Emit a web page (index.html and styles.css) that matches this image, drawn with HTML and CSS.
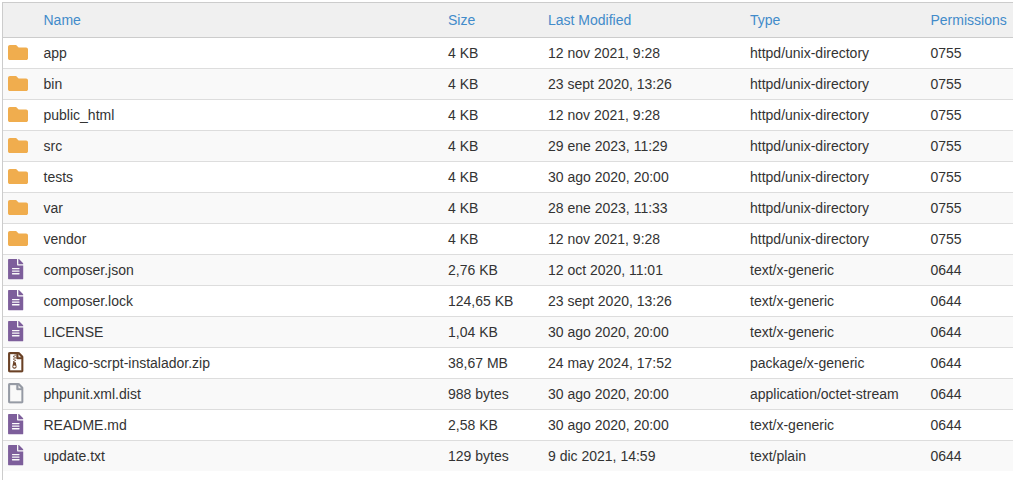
FILE: index.html
```html
<!DOCTYPE html>
<html lang="es">
<head>
<meta charset="utf-8">
<title>File Manager</title>
<link rel="stylesheet" href="styles.css">
</head>
<body>
<svg class="defs" width="0" height="0" aria-hidden="true">
  <symbol id="folder" viewBox="0 64 512 384"><path d="M464 128H272l-64-64H48C21.49 64 0 85.49 0 112v288c0 26.51 21.49 48 48 48h416c26.51 0 48-21.49 48-48V176c0-26.51-21.49-48-48-48z" fill="#f0ad4e"/></symbol>
  <symbol id="text" viewBox="0 0 384 512"><path d="M224 136V0H24C10.7 0 0 10.7 0 24v464c0 13.3 10.7 24 24 24h336c13.3 0 24-10.7 24-24V160H248c-13.2 0-24-10.8-24-24zm64 236c0 6.6-5.4 12-12 12H108c-6.6 0-12-5.4-12-12v-8c0-6.6 5.4-12 12-12h168c6.6 0 12 5.4 12 12v8zm0-64c0 6.6-5.4 12-12 12H108c-6.6 0-12-5.4-12-12v-8c0-6.6 5.4-12 12-12h168c6.6 0 12 5.4 12 12v8zm0-72v8c0 6.6-5.4 12-12 12H108c-6.6 0-12-5.4-12-12v-8c0-6.6 5.4-12 12-12h168c6.6 0 12 5.4 12 12zm96-114.1v6.1H256V0h6.1c6.4 0 12.5 2.5 17 7l97.9 98c4.5 4.5 7 10.6 7 16.9z" fill="#7d5e9b"/></symbol>
  <symbol id="zip" viewBox="0 0 384 512"><path d="M369.9 97.9L286 14C277 5 264.8-.1 252.1-.1H48C21.5 0 0 21.5 0 48v416c0 26.5 21.5 48 48 48h288c26.5 0 48-21.5 48-48V131.9c0-12.7-5.1-25-14.1-34zM332.1 128H256V51.9l76.1 76.1zM48 464V48h160v104c0 13.3 10.7 24 24 24h104v288H48z" fill="#6b4226" stroke="#6b4226" stroke-width="10"/><path d="M160 64h32v32h-32zM128 96h32v32h-32zM160 128h32v32h-32zM128 160h32v32h-32zM160 192h32v32h-32z" fill="#6b4226"/><path d="M194.2 265.7c-1.1-5.6-6-9.7-11.8-9.7H160v-32h-32v32l-19.7 97.1C102 385.6 126.8 416 160 416c33.1 0 57.9-30.2 51.5-62.6l-17.3-87.7zM160.4 390.1c-17.9 0-32.4-12.1-32.4-27s14.5-27 32.4-27 32.4 12.1 32.4 27-14.5 27-32.4 27z" fill="#6b4226"/></symbol>
  <symbol id="blank" viewBox="0 0 384 512"><path d="M369.9 97.9L286 14C277 5 264.8-.1 252.1-.1H48C21.5 0 0 21.5 0 48v416c0 26.5 21.5 48 48 48h288c26.5 0 48-21.5 48-48V131.9c0-12.7-5.1-25-14.1-34zM332.1 128H256V51.9l76.1 76.1zM48 464V48h160v104c0 13.3 10.7 24 24 24h104v288H48z" fill="#969ba5" stroke="#969ba5" stroke-width="8"/></symbol>
</svg>
<main class="panel">
<table class="files">
  <thead>
    <tr><th class="c-icon"></th><th class="c-name">Name</th><th class="c-size">Size</th><th class="c-date">Last Modified</th><th class="c-type">Type</th><th class="c-perm">Permissions</th></tr>
  </thead>
  <tbody>
    <tr><td class="c-icon"><svg class="ico-folder"><use href="#folder"/></svg></td><td>app</td><td>4 KB</td><td>12 nov 2021, 9:28</td><td>httpd/unix-directory</td><td>0755</td></tr>
    <tr><td class="c-icon"><svg class="ico-folder"><use href="#folder"/></svg></td><td>bin</td><td>4 KB</td><td>23 sept 2020, 13:26</td><td>httpd/unix-directory</td><td>0755</td></tr>
    <tr><td class="c-icon"><svg class="ico-folder"><use href="#folder"/></svg></td><td>public_html</td><td>4 KB</td><td>12 nov 2021, 9:28</td><td>httpd/unix-directory</td><td>0755</td></tr>
    <tr><td class="c-icon"><svg class="ico-folder"><use href="#folder"/></svg></td><td>src</td><td>4 KB</td><td>29 ene 2023, 11:29</td><td>httpd/unix-directory</td><td>0755</td></tr>
    <tr><td class="c-icon"><svg class="ico-folder"><use href="#folder"/></svg></td><td>tests</td><td>4 KB</td><td>30 ago 2020, 20:00</td><td>httpd/unix-directory</td><td>0755</td></tr>
    <tr><td class="c-icon"><svg class="ico-folder"><use href="#folder"/></svg></td><td>var</td><td>4 KB</td><td>28 ene 2023, 11:33</td><td>httpd/unix-directory</td><td>0755</td></tr>
    <tr><td class="c-icon"><svg class="ico-folder"><use href="#folder"/></svg></td><td>vendor</td><td>4 KB</td><td>12 nov 2021, 9:28</td><td>httpd/unix-directory</td><td>0755</td></tr>
    <tr><td class="c-icon"><svg class="ico-file"><use href="#text"/></svg></td><td>composer.json</td><td>2,76 KB</td><td>12 oct 2020, 11:01</td><td>text/x-generic</td><td>0644</td></tr>
    <tr><td class="c-icon"><svg class="ico-file"><use href="#text"/></svg></td><td>composer.lock</td><td>124,65 KB</td><td>23 sept 2020, 13:26</td><td>text/x-generic</td><td>0644</td></tr>
    <tr><td class="c-icon"><svg class="ico-file"><use href="#text"/></svg></td><td>LICENSE</td><td>1,04 KB</td><td>30 ago 2020, 20:00</td><td>text/x-generic</td><td>0644</td></tr>
    <tr><td class="c-icon"><svg class="ico-file"><use href="#zip"/></svg></td><td>Magico-scrpt-instalador.zip</td><td>38,67 MB</td><td>24 may 2024, 17:52</td><td>package/x-generic</td><td>0644</td></tr>
    <tr><td class="c-icon"><svg class="ico-file"><use href="#blank"/></svg></td><td>phpunit.xml.dist</td><td>988 bytes</td><td>30 ago 2020, 20:00</td><td>application/octet-stream</td><td>0644</td></tr>
    <tr><td class="c-icon"><svg class="ico-file"><use href="#text"/></svg></td><td>README.md</td><td>2,58 KB</td><td>30 ago 2020, 20:00</td><td>text/x-generic</td><td>0644</td></tr>
    <tr><td class="c-icon"><svg class="ico-file"><use href="#text"/></svg></td><td>update.txt</td><td>129 bytes</td><td>9 dic 2021, 14:59</td><td>text/plain</td><td>0644</td></tr>
  </tbody>
</table>
</main>
</body>
</html>
```
FILE: styles.css
```css
html, body { margin: 0; padding: 0; background: #fff; overflow: hidden; }
body { height: 480px; padding: 2px 0 0 2px; box-sizing: border-box; font-family: "Liberation Sans", Arial, sans-serif; font-size: 14px; color: #333; }
.defs { display: block; height: 0; }
.panel { height: 478px; border-left: 1px solid #ccc; box-sizing: border-box; }
.files { width: 1010px; border-collapse: separate; border-spacing: 0; table-layout: fixed; }
.files th { height: 36px; padding: 0 0 0 4px; box-sizing: border-box; background: #f0f0f0; color: #428bca; font-weight: 400; text-align: left; border-top: 1px solid #ccc; border-bottom: 1px solid #ccc; }
.files td { height: 31px; padding: 0 0 0 4px; box-sizing: border-box; border-bottom: 1px solid #ddd; white-space: nowrap; }
.files tbody tr:nth-child(even) td { background: #f9f9f9; }
.files tbody tr:last-child td { height: 30px; border-bottom: 0; }
.files .c-icon { width: 36.5px; padding: 0 0 0 5px; line-height: 0; vertical-align: top; }
.c-name { width: 404.5px; }
.c-size { width: 100px; }
.c-date { width: 202px; }
.c-type { width: 180.5px; }
.ico-folder { width: 20px; height: 15px; display: block; margin-top: 7px; }
.ico-file { width: 15.5px; height: 20.5px; display: block; margin-top: 4px; }
```
